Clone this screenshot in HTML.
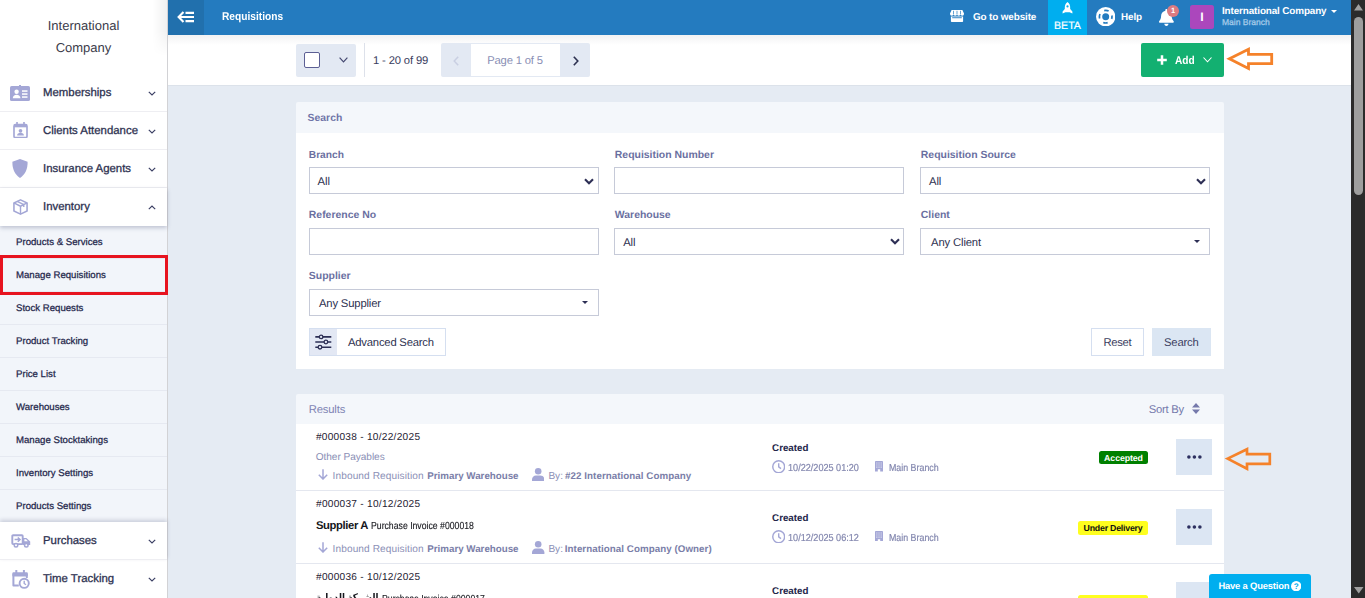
<!DOCTYPE html>
<html lang="en">
<head>
<meta charset="utf-8">
<title>Requisitions</title>
<style>
*{box-sizing:border-box;margin:0;padding:0}
html,body{width:1365px;height:598px;overflow:hidden;background:#e5ebf3;text-rendering:geometricPrecision;font-family:"Liberation Sans","DejaVu Sans",sans-serif;color:#202124}
.abs{position:absolute}
#app{position:relative;width:1365px;height:598px;overflow:hidden}
/* sidebar */
#side{position:absolute;left:0;top:0;width:168px;height:598px;background:#fff;border-right:1px solid #d2d2d5;z-index:5}
#side .co{position:absolute;left:0;width:167px;text-align:center;font-size:13px;color:#3b3b4a;line-height:22px;top:15px}
.mi{position:absolute;left:0;width:167px;height:38px;border-bottom:1px solid #eeeef2;background:#fff}
.mi .t{position:absolute;left:43px;top:12px;font-size:11.4px;color:#2d3150;-webkit-text-stroke:.3px #2d3150;white-space:nowrap;line-height:14px}
.mi svg.ic{position:absolute;left:10px;top:9px}
.mi svg.ch{position:absolute;left:147.700px;top:16.500px}
.sub{position:absolute;left:0;width:167px;height:33px;background:#f2f5fa;border-bottom:1px solid #e6e9f1}
.sub span{position:absolute;left:16px;top:10px;font-size:9.65px;color:#23264a;-webkit-text-stroke:.25px #23264a;white-space:nowrap;line-height:13px}
/* topbar */
#top{position:absolute;left:168px;top:0;width:1183px;height:35px;background:#247bbf;color:#fff}
#top .ham{position:absolute;left:0;top:0;width:36px;height:35px;background:#2170ad}
#top .ttl{position:absolute;left:53.600px;top:10px;font-size:11.250px;font-weight:bold;white-space:nowrap;line-height:14px;transform-origin:0 50%;transform:scaleX(.905)}
.tb{position:absolute;margin-top:1px;font-size:9.9px;font-weight:bold;letter-spacing:-.12px;line-height:14px;color:#fff;white-space:nowrap}
/* toolbar */
#bar{position:absolute;left:168px;top:35px;width:1183px;height:50px;background:#fff;box-shadow:0 1px 0 #dce2ea}
/* scrollbar */
#sb{position:absolute;left:1351px;top:0;width:14px;height:598px;background:#2b2b2b;z-index:20}
#sb .th{position:absolute;left:3px;top:17px;width:9px;height:178px;border-radius:5px;background:#9e9e9e}
.tx{position:absolute;white-space:nowrap;line-height:14px}
/* panels */
.ph{position:absolute;left:296px;width:928px;background:#f4f7fb}
.pb{position:absolute;left:296px;width:928px;background:#fff}
.lbl{position:absolute;font-size:11.6px;font-weight:bold;color:#6b719d;white-space:nowrap;line-height:14px;letter-spacing:-.2px}
.inp{position:absolute;width:289.500px;height:26.700px;border:1px solid #c6cad8;background:#fff}
.inp span{position:absolute;left:9px;top:7px;line-height:14px;white-space:nowrap}
</style>
</head>
<body>
<div id="app">

<!-- SIDEBAR -->
<div id="side">
  <div class="co">International<br>Company</div>
  <div class="abs" style="left:152px;top:0;width:15px;height:56px;background:linear-gradient(to right,rgba(0,0,0,0),rgba(0,0,0,.055));-webkit-mask-image:linear-gradient(#000 55%,transparent);mask-image:linear-gradient(#000 55%,transparent)"></div>

  <div class="mi" style="top:74px">
    <svg class="ic" width="20" height="20" viewBox="0 0 20 20" style="left:10px;top:8.5px"><rect x="0" y="3" width="20" height="15" rx="1.6" fill="#a4a7d6"/><rect x="9" y="2" width="2" height="3" fill="#a4a7d6"/><circle cx="6.6" cy="8.8" r="2.2" fill="#fff"/><path d="M2.8 15.2c0-2.2 1.6-3.4 3.8-3.4s3.800 1.200 3.800 3.400z" fill="#fff"/><rect x="12" y="7.300" width="5.500" height="1.500" fill="#fff"/><rect x="12" y="10.300" width="5.500" height="1.500" fill="#fff"/><rect x="12" y="13.300" width="5.500" height="1.500" fill="#fff"/></svg>
    <div class="t">Memberships</div>
    <svg class="ch" width="8" height="5" viewBox="0 0 8 5"><path d="M.8.800 4 4 7.200.8" fill="none" stroke="#3a3e63" stroke-width="1.150"/></svg>
  </div>

  <div class="mi" style="top:112px">
    <svg class="ic" width="15" height="16.5" viewBox="0 0 16 18" style="left:12.5px;top:9.5px"><rect x=".9" y="2.900" width="14.200" height="14.200" rx="1.600" fill="none" stroke="#a4a7d6" stroke-width="1.800"/><rect x="3.300" y="0" width="1.800" height="3.500" fill="#a4a7d6"/><rect x="10.900" y="0" width="1.800" height="3.500" fill="#a4a7d6"/><rect x="1" y="3" width="14" height="2.800" fill="#a4a7d6"/><circle cx="8" cy="9.600" r="2" fill="#a4a7d6"/><path d="M4.300 14.800c0-2 1.500-3 3.700-3s3.700 1 3.700 3z" fill="#a4a7d6"/></svg>
    <div class="t">Clients Attendance</div>
    <svg class="ch" width="8" height="5" viewBox="0 0 8 5"><path d="M.8.800 4 4 7.200.8" fill="none" stroke="#3a3e63" stroke-width="1.150"/></svg>
  </div>

  <div class="mi" style="top:150px">
    <svg class="ic" width="16" height="19" viewBox="0 0 16 19" style="left:12px;top:9px"><path d="M8 0 15.600 2.800c.2 6.600-2 12.400-7.600 16.200C2.400 15.200.2 9.400.4 2.800z" fill="#a4a7d6"/></svg>
    <div class="t">Insurance Agents</div>
    <svg class="ch" width="8" height="5" viewBox="0 0 8 5"><path d="M.8.800 4 4 7.200.8" fill="none" stroke="#3a3e63" stroke-width="1.150"/></svg>
  </div>

  <div class="mi" style="top:188px;box-shadow:0 2px 4px rgba(60,70,110,.28);z-index:3;border-bottom:none">
    <svg class="ic" width="15" height="16" viewBox="0 0 16 17" style="left:12.5px;top:11px"><path d="M8 .9 15 4.200v8.600L8 16.100 1 12.800V4.200z" fill="none" stroke="#a4a7d6" stroke-width="1.700" stroke-linejoin="round"/><path d="M1 4.200 8 7.700 15 4.200M8 7.700v8.400M4.500 2.600l7 3.400v2.600" fill="none" stroke="#a4a7d6" stroke-width="1.500" stroke-linejoin="round"/></svg>
    <div class="t">Inventory</div>
    <svg class="ch" width="8" height="5" viewBox="0 0 8 5"><path d="M.8 4.200 4 1 7.200 4.200" fill="none" stroke="#3a3e63" stroke-width="1.150"/></svg>
  </div>

  <div class="sub" style="top:226px"><span>Products &amp; Services</span></div>
  <div class="sub" style="top:259px"><span>Manage Requisitions</span></div>
  <div class="sub" style="top:292px"><span>Stock Requests</span></div>
  <div class="sub" style="top:325px"><span>Product Tracking</span></div>
  <div class="sub" style="top:358px"><span>Price List</span></div>
  <div class="sub" style="top:391px"><span>Warehouses</span></div>
  <div class="sub" style="top:424px"><span>Manage Stocktakings</span></div>
  <div class="sub" style="top:457px"><span>Inventory Settings</span></div>
  <div class="sub" style="top:490px;border-bottom:none;height:32px"><span>Products Settings</span></div>

  <div class="mi" style="top:522px;box-shadow:0 -2px 4px rgba(60,70,110,.22);z-index:3">
    <svg class="ic" width="20" height="14" viewBox="0 0 20 14" style="left:10.500px;top:11.500px"><rect x="1.300" y="1.200" width="10.400" height="8.900" rx=".8" fill="none" stroke="#a4a7d6" stroke-width="1.900"/><path d="M11.700 3.900h3.700l3.800 3.600v3.500h-7.500z" fill="#a4a7d6"/><path d="M13.400 5.300h1.600l1.900 1.900h-3.500z" fill="#fff"/><circle cx="5" cy="11.300" r="1.750" fill="#fff" stroke="#a4a7d6" stroke-width="1.500"/><circle cx="15.300" cy="11.300" r="1.750" fill="#fff" stroke="#a4a7d6" stroke-width="1.500"/><path d="M3.600 5.600h5.300M6.800 3.500l2.200 2.100-2.200 2.100" fill="none" stroke="#a4a7d6" stroke-width="1.500"/></svg>
    <div class="t">Purchases</div>
    <svg class="ch" width="8" height="5" viewBox="0 0 8 5"><path d="M.8.800 4 4 7.200.8" fill="none" stroke="#3a3e63" stroke-width="1.150"/></svg>
  </div>

  <div class="mi" style="top:560px;border-bottom:none">
    <svg class="ic" width="18" height="19" viewBox="0 0 18 19" style="left:11.700px;top:10px"><path d="M1.400 4v11.600h5.400" fill="none" stroke="#a4a7d6" stroke-width="2" stroke-linejoin="round"/><path d="M14.800 4v4" fill="none" stroke="#a4a7d6" stroke-width="2"/><rect x=".4" y="2.200" width="15.400" height="4.400" rx="1" fill="#a4a7d6"/><rect x="3.300" y="0" width="2" height="3.500" fill="#a4a7d6"/><rect x="10.900" y="0" width="2" height="3.500" fill="#a4a7d6"/><circle cx="12.200" cy="13.300" r="4.600" fill="#fff" stroke="#a4a7d6" stroke-width="1.900"/><path d="M12.200 10.800v2.700l1.800 1.300" fill="none" stroke="#a4a7d6" stroke-width="1.400"/></svg>
    <div class="t">Time Tracking</div>
    <svg class="ch" width="8" height="5" viewBox="0 0 8 5"><path d="M.8.800 4 4 7.200.8" fill="none" stroke="#3a3e63" stroke-width="1.150"/></svg>
  </div>

  <div style="position:absolute;left:0;top:255px;width:168px;height:40px;border:3px solid #e7131f;z-index:4"></div>
</div>

<!-- TOPBAR -->
<div id="top">
  <div class="ham">
    <svg class="abs" style="left:9px;top:10.700px" width="18" height="12" viewBox="0 0 18 12"><path d="M6.500 .9 1.600 6l4.900 5.100M1.800 6H17M8.500 1.900H17M8.500 10.100H17" fill="none" stroke="#fff" stroke-width="2.100" stroke-linejoin="miter"/></svg>
  </div>
  <div class="ttl">Requisitions</div>

  <!-- go to website -->
  <svg class="abs" style="left:782px;top:10.200px" width="14" height="12" viewBox="0 0 14 12"><path d="M1.600 0H12.400L14 3.400V4.100A1.750 1.750 0 0 1 10.500 4.100A1.750 1.750 0 0 1 7 4.100A1.750 1.750 0 0 1 3.500 4.100A1.750 1.750 0 0 1 0 4.100V3.400Z" fill="#fff"/><path d="M3.500 .8V4M7 .8V4M10.500 .8V4" stroke="#247bbf" stroke-width=".7"/><path d="M.9 6.500H13.100V11.200C13.100 11.700 12.800 12 12.300 12H1.700C1.200 12 .9 11.700 .9 11.200Z" fill="#fff"/><rect x="2.200" y="7.300" width="9.600" height=".9" fill="#247bbf"/></svg>
  <div class="tb" style="left:805px;top:10px">Go to website</div>

  <!-- beta -->
  <div class="abs" style="left:880px;top:0;width:39px;height:35px;background:#00aeef"></div>
  <svg class="abs" style="left:894px;top:2px" width="11" height="12" viewBox="0 0 11 12"><path d="M5.500 0C7.600 1.400 8.400 3.800 8.200 7l2.200 2.600v2L7.600 10.200H3.400L.6 11.600v-2L2.800 7C2.600 3.800 3.400 1.400 5.500 0z" fill="#fff"/><circle cx="5.500" cy="4.400" r="1.100" fill="#00aeef"/></svg>
  <div class="abs" style="left:880px;width:39px;top:20px;text-align:center;font-size:10.600px;line-height:12px;color:#fff;-webkit-text-stroke:.2px #fff">BETA</div>

  <!-- help -->
  <svg class="abs" style="left:927.800px;top:6.900px" width="19.400" height="19.400" viewBox="0 0 19.400 19.400"><circle cx="9.700" cy="9.700" r="9.700" fill="#fff"/><circle cx="9.700" cy="9.700" r="3.500" fill="#247bbf"/><circle cx="9.700" cy="9.700" r="6.300" fill="none" stroke="#247bbf" stroke-width="1.700" stroke-dasharray="4.600 5.296" stroke-dashoffset="2.300"/></svg>
  <div class="tb" style="left:953px;top:10px">Help</div>

  <!-- bell -->
  <svg class="abs" style="left:991.200px;top:9.300px" width="14.800" height="16.900" viewBox="0 0 448 512"><path d="M224 512c35.320 0 63.970-28.650 63.970-64H160.030c0 35.350 28.650 64 63.970 64zm215.390-149.710c-19.320-20.760-55.470-51.990-55.470-154.290 0-77.700-54.480-139.900-127.940-155.160V32c0-17.670-14.320-32-31.980-32s-31.980 14.330-31.980 32v20.840C118.560 68.100 64.080 130.300 64.080 208c0 102.300-36.150 133.530-55.470 154.290-6 6.450-8.660 14.160-8.610 21.710.110 16.400 12.980 32 32.100 32h383.800c19.120 0 32-15.600 32.100-32 .050-7.550-2.610-15.270-8.610-21.710z" fill="#fff"/></svg>
  <div class="abs" style="left:999px;top:4.500px;width:12px;height:12px;border-radius:6px;background:#db7b82"></div>
  <div class="abs" style="left:999px;top:5px;width:12px;text-align:center;font-size:7.500px;line-height:11px;font-weight:bold;color:#fff">1</div>

  <!-- avatar -->
  <div class="abs" style="left:1022px;top:5px;width:24px;height:24px;border-radius:2.500px;background:#ab47bc"></div>
  <div class="abs" style="left:1022px;top:6px;width:24px;text-align:center;font-size:12.300px;font-weight:bold;line-height:23px;color:#fff">I</div>
  <div class="tb" style="left:1054px;top:4px">International Company</div>
  <svg class="abs" style="left:1163px;top:10px" width="6" height="3" viewBox="0 0 6 3"><path d="M0 0h6L3 3z" fill="#fff"/></svg>
  <div class="abs" style="left:1054px;top:17px;font-size:8.500px;line-height:11px;color:#a9cdea;-webkit-text-stroke:.25px #a9cdea;white-space:nowrap">Main Branch</div>
</div>

<!-- TOOLBAR -->
<div id="bar">
  <div class="abs" style="left:0;top:0;width:1183px;height:10px;background:linear-gradient(#f2f2f3,#fff)"></div>
  <!-- checkbox -->
  <div class="abs" style="left:128px;top:9px;width:60px;height:33px;border-radius:2px;background:#e3e9f3"></div>
  <div class="abs" style="left:136px;top:17px;width:16px;height:16px;border:1px solid #5c5f94;border-radius:2px;background:#fff"></div>
  <svg class="abs" style="left:170.500px;top:22px" width="9" height="6" viewBox="0 0 9 6"><path d="M.6.700 4.500 4.800 8.400.7" fill="none" stroke="#444870" stroke-width="1.200"/></svg>
  <div class="abs" style="left:196px;top:8px;width:1px;height:34px;background:#dde1ea"></div>
  <div class="abs" style="left:205px;top:19px;font-size:11.250px;letter-spacing:-.15px;line-height:14px;color:#3a3d60;white-space:nowrap">1 - 20 of 99</div>
  <!-- pagination -->
  <div class="abs" style="left:273px;top:8px;width:149px;height:34px;border-radius:2px;background:#e3e9f3"></div>
  <div class="abs" style="left:302px;top:8px;width:90.500px;height:34px;background:#fff;border:1px solid #e3e9f3"></div>
  <div class="abs" style="left:302px;width:90px;top:19px;text-align:center;font-size:11.250px;letter-spacing:-.18px;line-height:14px;color:#8a8fb5;white-space:nowrap">Page 1 of 5</div>
  <svg class="abs" style="left:285px;top:20.500px" width="6" height="10" viewBox="0 0 6 10"><path d="M5.200.8 1.200 5l4 4.200" fill="none" stroke="#c9cfe2" stroke-width="1.500"/></svg>
  <svg class="abs" style="left:404.500px;top:20.500px" width="6" height="10" viewBox="0 0 6 10"><path d="M.8.800 4.800 5 .8 9.200" fill="none" stroke="#2d3150" stroke-width="1.600"/></svg>
  <!-- add -->
  <div class="abs" style="left:973px;top:8px;width:83px;height:33.500px;border-radius:2px;background:#13b071"></div>
  <svg class="abs" style="left:988.500px;top:20px" width="10" height="10" viewBox="0 0 10 10"><path d="M5 .2v9.600M.2 5h9.600" stroke="#fff" stroke-width="2.500"/></svg>
  <div class="abs" style="left:1006.800px;top:19px;font-size:11.250px;font-weight:bold;line-height:14px;color:#fff;white-space:nowrap;transform-origin:0 50%;transform:scaleX(.9)">Add</div>
  <svg class="abs" style="left:1034.500px;top:22px" width="9" height="6" viewBox="0 0 9 6"><path d="M.5.500 4.500 4.800 8.500.5" fill="none" stroke="#fff" stroke-width="1.100"/></svg>
  <!-- orange arrow -->
  <svg class="abs" style="left:1055px;top:8px" width="54" height="32" viewBox="0 0 54 32"><path d="M6.400 15.800 25.500 6.300V11.300H48.700V20.600H25.500V25.400Z" fill="none" stroke="#f5822a" stroke-width="2.800" stroke-linejoin="miter"/></svg>
</div>

<!-- SEARCH PANEL -->
<div class="ph" style="top:102px;height:31px;border-radius:2px 2px 0 0"></div>
<div class="pb" style="top:133px;height:236px"></div>
<div class="tx" style="left:307.6px;top:112.00px;font-size:10.4px;color:#6f74a8;font-weight:bold;">Search</div>
<div class="tx" style="left:308.8px;top:149.00px;font-size:10.2px;color:#6a6f9f;font-weight:bold;">Branch</div>
<div class="tx" style="left:614.8px;top:149.00px;font-size:10.45px;color:#6a6f9f;font-weight:bold;">Requisition Number</div>
<div class="tx" style="left:920.8px;top:149.00px;font-size:10.45px;color:#6a6f9f;font-weight:bold;">Requisition Source</div>
<div class="tx" style="left:308.8px;top:209.00px;font-size:10.45px;color:#6a6f9f;font-weight:bold;">Reference No</div>
<div class="tx" style="left:614.8px;top:209.00px;font-size:10.45px;color:#6a6f9f;font-weight:bold;">Warehouse</div>
<div class="tx" style="left:920.8px;top:209.00px;font-size:10.45px;color:#6a6f9f;font-weight:bold;">Client</div>
<div class="tx" style="left:308.8px;top:270.00px;font-size:10.45px;color:#6a6f9f;font-weight:bold;">Supplier</div>
<div class="inp" style="left:309px;top:167px"></div>
<div class="inp" style="left:614px;top:167px"></div>
<div class="inp" style="left:920px;top:167px"></div>
<div class="inp" style="left:309px;top:228px"></div>
<div class="inp" style="left:614px;top:228px"></div>
<div class="inp" style="left:920px;top:228px"></div>
<div class="inp" style="left:309px;top:289.3px"></div>
<div class="tx" style="left:317.6px;top:175.00px;font-size:11.25px;color:#2d3150;letter-spacing:-0.07px;">All</div>
<svg class="abs" style="left:584px;top:177.8px" width="10" height="7" viewBox="0 0 10 7"><path d="M1 1.200 5 5.200 9 1.200" fill="none" stroke="#2d2f55" stroke-width="2.100"/></svg>
<div class="tx" style="left:929px;top:175.00px;font-size:11.25px;color:#2d3150;letter-spacing:-0.07px;">All</div>
<svg class="abs" style="left:1196px;top:177.8px" width="10" height="7" viewBox="0 0 10 7"><path d="M1 1.200 5 5.200 9 1.200" fill="none" stroke="#2d2f55" stroke-width="2.100"/></svg>
<div class="tx" style="left:623.2px;top:236.00px;font-size:11.25px;color:#2d3150;letter-spacing:-0.07px;">All</div>
<svg class="abs" style="left:890px;top:238.2px" width="10" height="7" viewBox="0 0 10 7"><path d="M1 1.200 5 5.200 9 1.200" fill="none" stroke="#2d2f55" stroke-width="2.100"/></svg>
<div class="tx" style="left:931.1px;top:236.00px;font-size:11.25px;color:#2d3150;letter-spacing:-0.14px;">Any Client</div>
<svg class="abs" style="left:1194.2px;top:240.4px" width="6" height="3" viewBox="0 0 6 3"><path d="M0 0h6L3 3z" fill="#2d2f55"/></svg>
<div class="tx" style="left:319px;top:297.00px;font-size:11.25px;color:#2d3150;letter-spacing:-0.16px;">Any Supplier</div>
<svg class="abs" style="left:582.4px;top:301.1px" width="6" height="3" viewBox="0 0 6 3"><path d="M0 0h6L3 3z" fill="#2d2f55"/></svg>
<div class="abs" style="left:309px;top:328px;width:137px;height:28px;background:#fff;border:1px solid #d5dff0"></div>
<div class="abs" style="left:309px;top:328px;width:28px;height:28px;background:#e3e8f4;border:1px solid #d5dff0;border-right:none"></div>
<svg class="abs" style="left:315px;top:334px" width="17" height="16" viewBox="0 0 17 16"><path d="M.3 2.900H16.300M.3 8H16.300M.3 13.200H16.300" stroke="#2d2f55" stroke-width="1.600"/><circle cx="6.100" cy="2.900" r="1.800" fill="#e3e8f4" stroke="#2d2f55" stroke-width="1.300"/><circle cx="10.900" cy="8" r="1.800" fill="#e3e8f4" stroke="#2d2f55" stroke-width="1.300"/><circle cx="5" cy="13.200" r="1.800" fill="#e3e8f4" stroke="#2d2f55" stroke-width="1.300"/></svg>
<div class="tx" style="left:348px;top:336.00px;font-size:11.25px;color:#2d3150;letter-spacing:-0.2px;">Advanced Search</div>
<div class="abs" style="left:1091px;top:328px;width:53px;height:28px;background:#fff;border:1px solid #d5dff0"></div>
<div class="tx" style="left:1103.5px;top:336.00px;font-size:11.25px;color:#3a3d60;letter-spacing:-0.34px;">Reset</div>
<div class="abs" style="left:1152px;top:328px;width:59px;height:28px;background:#dbe6f3"></div>
<div class="tx" style="left:1164px;top:336.00px;font-size:11.25px;color:#3a3d60;letter-spacing:-0.19px;">Search</div>

<!-- RESULTS PANEL -->
<div class="ph" style="top:394px;height:30px;border-radius:2px 2px 0 0"></div>
<div class="pb" style="top:424px;height:174px"></div>
<div class="tx" style="left:308.7px;top:403.00px;font-size:11.25px;color:#8084b4;letter-spacing:-0.15px;">Results</div>
<div class="tx" style="left:1148.7px;top:403.00px;font-size:11.25px;color:#7579ab;letter-spacing:-0.23px;">Sort By</div>
<svg class="abs" style="left:1192px;top:403.400px" width="8" height="11" viewBox="0 0 8 11"><path d="M4 0 8 4.600H0zM4 11 8 6.400H0z" fill="#7579ab"/></svg>
<div class="abs" style="left:296px;top:490px;width:928px;height:1px;background:#e4e7ef"></div>
<div class="abs" style="left:296px;top:563px;width:928px;height:1px;background:#e4e7ef"></div>
<div class="tx" style="left:315.9px;top:431.00px;font-size:10.1px;color:#1f2233;letter-spacing:0.28px;">#000038 - 10/22/2025</div>
<div class="tx" style="left:315.7px;top:451.00px;font-size:10.1px;color:#8b8fb6;letter-spacing:-0.04px;">Other Payables</div>
<svg class="abs" style="left:318px;top:469px" width="10" height="11" viewBox="0 0 10 11"><path d="M5 .3V9.800M.8 5.800 5 10 9.200 5.800" fill="none" stroke="#a4a7d6" stroke-width="1.500"/></svg>
<div class="tx" style="left:332.6px;top:470.00px;font-size:10.1px;color:#8b8fb6;letter-spacing:0.1px;">Inbound Requisition</div>
<div class="tx" style="left:427.3px;top:470.00px;font-size:9.75px;color:#7a7ea8;font-weight:bold;">Primary Warehouse</div>
<svg class="abs" style="left:531.9px;top:467.5px" width="12.400" height="13.400" viewBox="0 0 12.400 13.400"><circle cx="6.200" cy="3.300" r="3.300" fill="#a4a7d6"/><path d="M0 13.400V11.600C0 9.300 1.700 7.600 4 7.600H8.400C10.700 7.600 12.400 9.300 12.400 11.600V13.400z" fill="#a4a7d6"/></svg>
<div class="tx" style="left:548.4px;top:470.00px;font-size:10.1px;color:#8b8fb6;">By:</div>
<div class="tx" style="left:565.1px;top:470.00px;font-size:9.75px;color:#7a7ea8;font-weight:bold;letter-spacing:0.06px;">#22 International Company</div>
<div class="tx" style="left:772.1px;top:442.00px;font-size:9.75px;color:#23264a;font-weight:bold;">Created</div>
<svg class="abs" style="left:772px;top:459.6px" width="13.400" height="13.400" viewBox="0 0 13.400 13.400"><circle cx="6.700" cy="6.700" r="5.950" fill="none" stroke="#a4a7d6" stroke-width="1.450"/><path d="M6.700 3.200V6.900L9 8.600" fill="none" stroke="#a4a7d6" stroke-width="1.400"/></svg>
<div class="tx" style="left:788.2px;top:462.00px;font-size:10.2px;color:#8286ae;-webkit-text-stroke:0.2px #8286ae;transform-origin:0 50%;transform:scaleX(.894);">10/22/2025 01:20</div>
<svg class="abs" style="left:875.3px;top:461px" width="8" height="10.500" viewBox="0 0 8 10.500"><path d="M.8 0H7.200C7.600 0 8 .4 8 .8V10.500H5.200V8.200H2.800V10.500H0V.8C0 .4.400 0 .8 0z" fill="#a4a7d6"/><path d="M1.300 1.400h1.100v1.100H1.300zM3.450 1.400h1.100v1.100H3.450zM5.600 1.400h1.100v1.100H5.600zM1.300 3.500h1.100v1.100H1.300zM3.450 3.500h1.100v1.100H3.450zM5.600 3.500h1.100v1.100H5.600zM1.300 5.600h1.100v1.100H1.300zM3.450 5.600h1.100v1.100H3.450zM5.600 5.600h1.100v1.100H5.600z" fill="#fff" fill-opacity=".75"/></svg>
<div class="tx" style="left:889.1px;top:462.00px;font-size:10.2px;color:#8286ae;-webkit-text-stroke:0.2px #8286ae;transform-origin:0 50%;transform:scaleX(.868);">Main Branch</div>
<div class="abs" style="left:1099px;top:451px;width:49px;height:13px;border-radius:2.500px;background:#008000"></div>
<div class="tx" style="left:1099px;width:49px;text-align:center;top:451.00px;font-size:8.8px;color:#fff;font-weight:bold;letter-spacing:-0.1px;">Accepted</div>
<div class="abs" style="left:1176px;top:439px;width:36px;height:36px;background:#dce6f3"></div><svg class="abs" style="left:1186.500px;top:454.7px" width="15" height="4" viewBox="0 0 15 4"><circle cx="1.900" cy="2" r="1.800" fill="#2d3060"/><circle cx="7.400" cy="2" r="1.800" fill="#2d3060"/><circle cx="12.900" cy="2" r="1.800" fill="#2d3060"/></svg>
<svg class="abs" style="left:1220px;top:440px" width="56" height="38" viewBox="0 0 56 38"><path d="M7.600 18.600 27 9.200V14.200H49.800V23.800H27V28.800Z" fill="none" stroke="#f5822a" stroke-width="2.700" stroke-linejoin="miter"/></svg>
<div class="tx" style="left:316px;top:498.00px;font-size:10.1px;color:#1f2233;letter-spacing:0.28px;">#000037 - 10/12/2025</div>
<div class="tx" style="left:316px;top:519.00px;font-size:11.25px;color:#15161c;font-weight:bold;letter-spacing:-0.38px;">Supplier A</div>
<div class="tx" style="left:370.8px;top:520.00px;font-size:10.2px;color:#15161c;-webkit-text-stroke:0.12px #15161c;transform-origin:0 50%;transform:scaleX(.853);">Purchase Invoice #000018</div>
<svg class="abs" style="left:318px;top:542.3px" width="10" height="11" viewBox="0 0 10 11"><path d="M5 .3V9.800M.8 5.800 5 10 9.200 5.800" fill="none" stroke="#a4a7d6" stroke-width="1.500"/></svg>
<div class="tx" style="left:332.6px;top:543.00px;font-size:10.1px;color:#8b8fb6;letter-spacing:0.1px;">Inbound Requisition</div>
<div class="tx" style="left:427.3px;top:543.00px;font-size:9.75px;color:#7a7ea8;font-weight:bold;">Primary Warehouse</div>
<svg class="abs" style="left:532.2px;top:540.8px" width="12.400" height="13.400" viewBox="0 0 12.400 13.400"><circle cx="6.200" cy="3.300" r="3.300" fill="#a4a7d6"/><path d="M0 13.400V11.600C0 9.300 1.700 7.600 4 7.600H8.400C10.700 7.600 12.400 9.300 12.400 11.600V13.400z" fill="#a4a7d6"/></svg>
<div class="tx" style="left:548.4px;top:543.00px;font-size:10.1px;color:#8b8fb6;">By:</div>
<div class="tx" style="left:564.8px;top:543.00px;font-size:9.75px;color:#7a7ea8;font-weight:bold;letter-spacing:0.06px;">International Company (Owner)</div>
<div class="tx" style="left:772.1px;top:512.00px;font-size:9.75px;color:#23264a;font-weight:bold;">Created</div>
<svg class="abs" style="left:772px;top:529.5px" width="13.400" height="13.400" viewBox="0 0 13.400 13.400"><circle cx="6.700" cy="6.700" r="5.950" fill="none" stroke="#a4a7d6" stroke-width="1.450"/><path d="M6.700 3.200V6.900L9 8.600" fill="none" stroke="#a4a7d6" stroke-width="1.400"/></svg>
<div class="tx" style="left:788.2px;top:532.00px;font-size:10.2px;color:#8286ae;-webkit-text-stroke:0.2px #8286ae;transform-origin:0 50%;transform:scaleX(.894);">10/12/2025 06:12</div>
<svg class="abs" style="left:875.3px;top:530.9px" width="8" height="10.500" viewBox="0 0 8 10.500"><path d="M.8 0H7.200C7.600 0 8 .4 8 .8V10.500H5.200V8.200H2.800V10.500H0V.8C0 .4.400 0 .8 0z" fill="#a4a7d6"/><path d="M1.300 1.400h1.100v1.100H1.300zM3.450 1.400h1.100v1.100H3.450zM5.600 1.400h1.100v1.100H5.600zM1.300 3.500h1.100v1.100H1.300zM3.450 3.500h1.100v1.100H3.450zM5.600 3.500h1.100v1.100H5.600zM1.300 5.600h1.100v1.100H1.300zM3.450 5.600h1.100v1.100H3.450zM5.600 5.600h1.100v1.100H5.600z" fill="#fff" fill-opacity=".75"/></svg>
<div class="tx" style="left:889.1px;top:532.00px;font-size:10.2px;color:#8286ae;-webkit-text-stroke:0.2px #8286ae;transform-origin:0 50%;transform:scaleX(.868);">Main Branch</div>
<div class="abs" style="left:1078px;top:521px;width:70px;height:14px;border-radius:2.500px;background:#fefe1f"></div>
<div class="tx" style="left:1078px;width:70px;text-align:center;top:521.00px;font-size:8.8px;color:#111;font-weight:bold;letter-spacing:-0.23px;">Under Delivery</div>
<div class="abs" style="left:1176px;top:509px;width:36px;height:36px;background:#dce6f3"></div><svg class="abs" style="left:1186.500px;top:524.7px" width="15" height="4" viewBox="0 0 15 4"><circle cx="1.900" cy="2" r="1.800" fill="#2d3060"/><circle cx="7.400" cy="2" r="1.800" fill="#2d3060"/><circle cx="12.900" cy="2" r="1.800" fill="#2d3060"/></svg>
<div class="tx" style="left:316px;top:571.00px;font-size:10.1px;color:#1f2233;letter-spacing:0.28px;">#000036 - 10/12/2025</div>
<div class="tx" style="left:316px;top:591.00px;font-size:10.5px;color:#15161c;font-weight:bold;font-family:'Liberation Sans','DejaVu Sans',sans-serif;direction:rtl;transform-origin:0 50%;transform:scaleX(.836);">الشركة الدولية</div>
<div class="tx" style="left:382.4px;top:593.00px;font-size:10.2px;color:#15161c;-webkit-text-stroke:0.12px #15161c;transform-origin:0 50%;transform:scaleX(.853);">Purchase Invoice #000017</div>
<div class="tx" style="left:772.1px;top:585.00px;font-size:9.75px;color:#23264a;font-weight:bold;">Created</div>
<div class="abs" style="left:1078px;top:595px;width:70px;height:14px;border-radius:2.500px;background:#fefe1f"></div>
<div class="abs" style="left:1176px;top:582px;width:36px;height:36px;background:#dce6f3"></div><svg class="abs" style="left:1186.500px;top:597.7px" width="15" height="4" viewBox="0 0 15 4"><circle cx="1.900" cy="2" r="1.800" fill="#2d3060"/><circle cx="7.400" cy="2" r="1.800" fill="#2d3060"/><circle cx="12.900" cy="2" r="1.800" fill="#2d3060"/></svg>
<div class="abs" style="left:1209px;top:574px;width:102px;height:24px;border-radius:3px 3px 0 0;background:#00aeef;z-index:6"></div>
<div class="tx" style="left:1218.4px;top:579.00px;font-size:9.4px;color:#fff;font-weight:bold;letter-spacing:-0.17px;z-index:7;">Have a Question</div>
<svg class="abs" style="left:1291px;top:580.900px;z-index:7" width="10.400" height="10.400" viewBox="0 0 9.600 9.600"><circle cx="4.800" cy="4.800" r="4.800" fill="#fff"/><text x="4.800" y="7.500" text-anchor="middle" font-family="Liberation Sans, sans-serif" font-weight="bold" font-size="7.500" fill="#00aeef">?</text></svg>

<!-- SCROLLBAR -->
<div id="sb"><div class="th"></div><svg class="abs" style="left:3px;top:4px" width="9" height="7" viewBox="0 0 9 7"><path d="M4.500 0 9 6.500H0z" fill="#a0a0a0"/></svg><svg class="abs" style="left:3px;top:587.400px" width="9.500" height="7" viewBox="0 0 9.500 7"><path d="M0 0H9.500L4.750 6.500z" fill="#a0a0a0"/></svg></div>

</div>
</body>
</html>
